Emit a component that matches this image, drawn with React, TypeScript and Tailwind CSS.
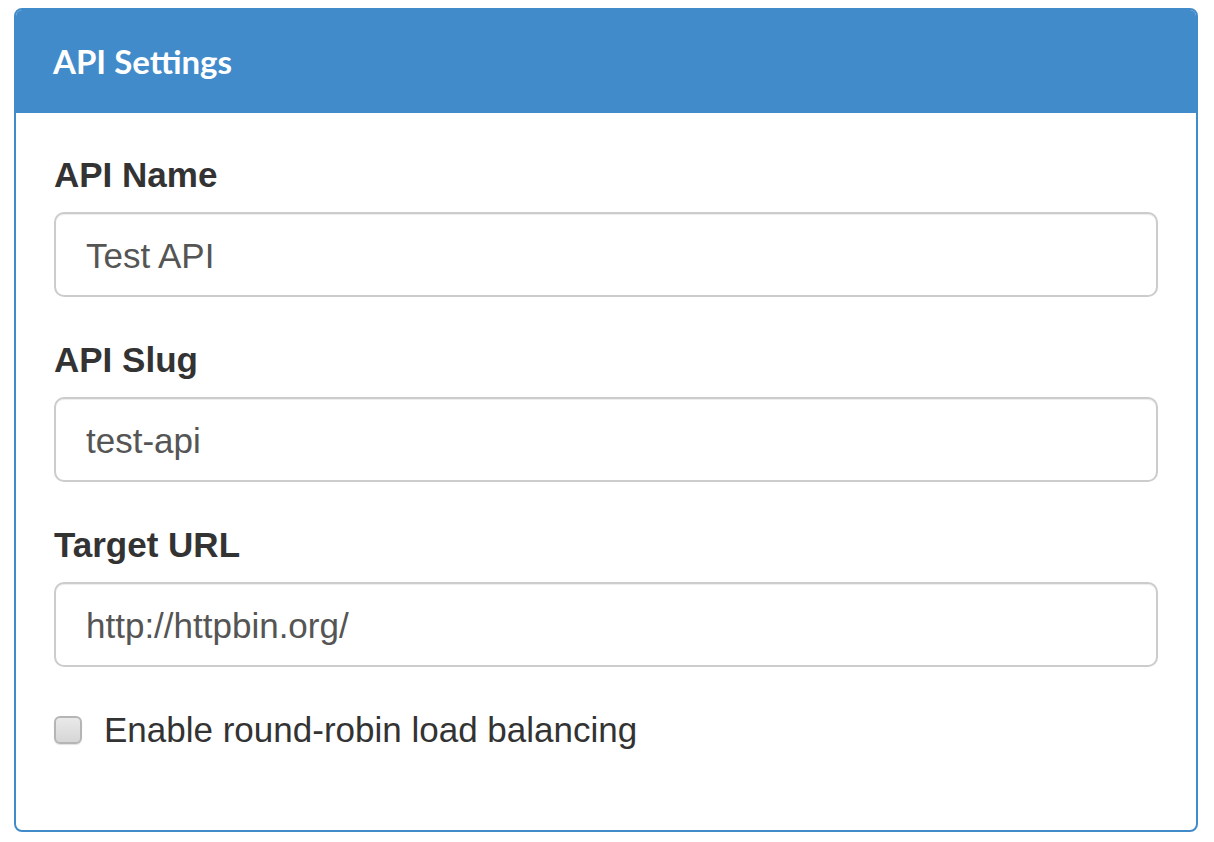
import { useState } from 'react';

const fields = [
  { label: 'API Name', value: 'Test API' },
  { label: 'API Slug', value: 'test-api' },
  { label: 'Target URL', value: 'http://httpbin.org/' },
];

export default function App() {
  const [values, setValues] = useState(fields.map((f) => f.value));
  const [roundRobin, setRoundRobin] = useState(false);

  return (
    <div className="min-h-[842px] bg-white pt-2 pl-[14px] pr-4 font-['Liberation_Sans',Arial,sans-serif]">
      <div className="w-[1184px] h-[824px] rounded-[8px] border-2 border-[#428bca] overflow-hidden">
        {/* Header */}
        <div className="h-[103px] bg-[#428bca] flex items-center pl-[37px]">
          <h1 className="font-['Lato',sans-serif] font-bold text-[33px] text-white leading-none pb-[1px]">API Settings</h1>
        </div>

        {/* Body */}
        <div className="px-[38px] pt-[42px]">
          {fields.map((f, i) => (
            <div key={f.label} className="mb-[43px]">
              <label className="block text-[35px] leading-[40px] font-bold text-[#333] mb-[17px]">
                {f.label}
              </label>
              <input
                value={values[i]}
                onChange={(e) => {
                  const next = [...values];
                  next[i] = e.target.value;
                  setValues(next);
                }}
                className="block w-full h-[85px] rounded-[10px] border-2 border-[#cccccc] bg-white pl-[30px] pt-[2px] text-[35px] text-[#555] shadow-[inset_0_1px_1px_rgba(0,0,0,0.075)] outline-none"
              />
            </div>
          ))}

          <label className="flex items-center gap-[22px] cursor-pointer">
            <span
              onClick={() => setRoundRobin(!roundRobin)}
              className="w-[28px] h-[28px] rounded-[6px] border-2 border-[#b5b5b5] bg-gradient-to-b from-[#e9e9e9] to-[#d6d6d6] shadow-[0_1px_1px_rgba(0,0,0,0.12)] flex items-center justify-center text-[#333] text-[20px] leading-none"
            >
              {roundRobin ? '✓' : ''}
            </span>
            <span className="text-[35px] leading-[40px] text-[#333]">Enable round-robin load balancing</span>
          </label>
        </div>
      </div>
    </div>
  );
}
